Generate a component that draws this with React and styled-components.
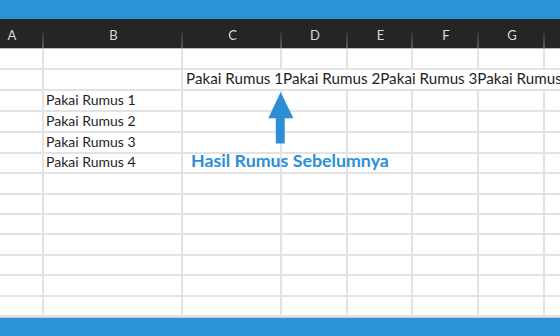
import styled, { createGlobalStyle } from 'styled-components';

const Global = createGlobalStyle`
  body {
    margin: 0;
    overflow: hidden;
    background: #fff;
    font-family: Lato, "Liberation Sans", sans-serif;
  }
`;

const Page = styled.div`
  position: relative;
  width: 560px;
  height: 336px;
  overflow: hidden;
  display: flex;
  flex-direction: column;
`;

const Bar = styled.div`
  height: ${p => p.h}px;
  flex-shrink: 0;
  background: #2893d6;
  border-top: ${p => (p.edge ? '1px solid #c9c9c9' : 'none')};
  box-sizing: border-box;
`;

const Sheet = styled.div`
  display: grid;
  margin-left: -20px;
  grid-template-columns: 64px 139px 99px 66px 65px 66px 66px 80px;
  grid-template-rows: 30px 21px 21px 21px 21px 21px 20px 21px 20px 20px 21px 20px 21px 20px;
`;

const Head = styled.div`
  position: relative;
  background: #252525;
  color: #d9d9d9;
  font-size: 13px;
  display: flex;
  align-items: center;
  justify-content: center;
  padding-top: 3px;
  border-bottom: 1px solid #b9b9b9;
  box-sizing: border-box;

  &::after {
    content: '';
    position: absolute;
    right: 0;
    top: 10px;
    bottom: 0;
    width: 2px;
    background: linear-gradient(to bottom, rgba(90, 90, 90, 0), #5c5c5c);
  }
`;

const Cell = styled.div`
  border-right: 2px solid #e3e3e3;
  border-bottom: 2px solid #e3e3e3;
  box-sizing: border-box;
  display: flex;
  align-items: flex-end;
  padding: 0 0 3px ${p => (p.wide ? 3 : 2)}px;
  font-size: ${p => (p.wide ? 15.2 : 14)}px;
  line-height: 1;
  color: #1e1e1e;
  white-space: nowrap;
  overflow: hidden;
  grid-column: ${p => (p.wide ? 'span 6' : 'auto')};
`;

const Note = styled.div`
  position: absolute;
  left: 191px;
  top: 152px;
  font-size: 17.8px;
  font-weight: 700;
  line-height: 1;
  color: #2b8fd6;
  white-space: nowrap;
`;

const Arrow = styled.svg`
  position: absolute;
  left: 266px;
  top: 90px;
  width: 30px;
  height: 56px;
`;

const cols = ['A', 'B', 'C', 'D', 'E', 'F', 'G', 'H'];

const App = () => {
  const rows = Array.from({ length: 13 }, (_, i) => i);
  return (
    <Page>
      <Global />
      <Bar h={19} />
      <Sheet>
        {cols.map(c => (
          <Head key={c}>{c === 'H' ? '' : c}</Head>
        ))}
        {rows.map(r => {
          if (r === 1) {
            return [
              <Cell key={`${r}a`} />,
              <Cell key={`${r}b`} />,
              <Cell key={`${r}c`} wide>
                Pakai Rumus 1Pakai Rumus 2Pakai Rumus 3Pakai Rumus 4
              </Cell>,
            ];
          }
          const label = r >= 2 && r <= 5 ? `Pakai Rumus ${r - 1}` : '';
          return cols.map(c => (
            <Cell key={`${r}${c}`}>{c === 'B' ? label : ''}</Cell>
          ));
        })}
      </Sheet>
      <Bar h={20} edge />
      <Arrow viewBox="0 0 30 56">
        <polygon
          points="14.7,2 27.3,28.3 18.7,28.3 18.7,53.5 9.8,53.5 9.8,28.3 2.3,28.3"
          fill="#2a8fd6"
        />
      </Arrow>
      <Note>Hasil Rumus Sebelumnya</Note>
    </Page>
  );
};

export default App;
